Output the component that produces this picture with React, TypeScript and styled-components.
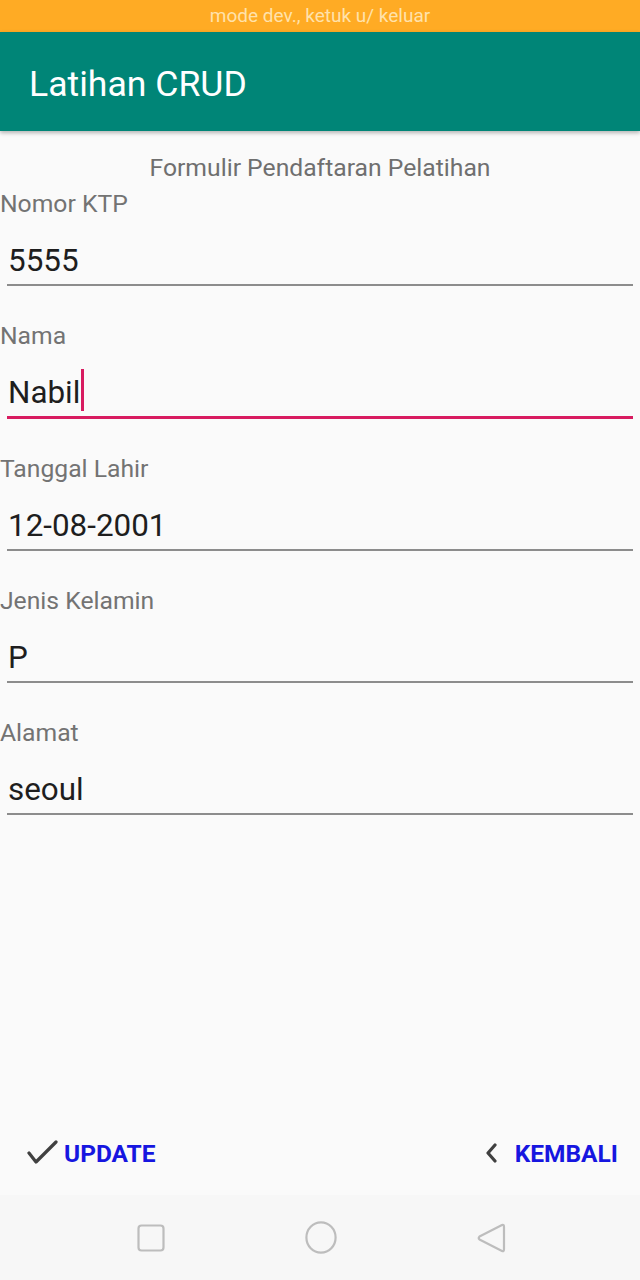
import React from "react";
import styled, { createGlobalStyle } from "styled-components";

const Global = createGlobalStyle`
  html, body { margin: 0; padding: 0; background: #fafafa; }
  body { font-family: Roboto, "Noto Sans", sans-serif; }
  * { box-sizing: border-box; }
`;

const Screen = styled.div`
  width: 640px;
  height: 1280px;
  display: flex;
  flex-direction: column;
  background: #fafafa;
  overflow: hidden;
`;

const StatusBar = styled.div`
  height: 32px;
  background: #ffab24;
  color: #ffe2ab;
  font-size: 19px;
  line-height: 32px;
  text-align: center;
  flex: none;
`;

const AppBar = styled.header`
  height: 99px;
  flex: none;
  background: #008577;
  display: flex;
  align-items: center;
  padding: 0 0 0 29px;
  box-shadow: 0 2px 4px rgba(0, 0, 0, 0.28);
  position: relative;
  z-index: 1;
`;

const AppTitle = styled.h1`
  margin: 0;
  color: #ffffff;
  font-size: 35.6px;
  font-weight: 400;
  line-height: 40px;
  padding-top: 4px;
`;

const Main = styled.main`
  flex: 1;
  display: flex;
  flex-direction: column;
  padding-top: 23px;
`;

const FormTitle = styled.div`
  text-align: center;
  font-size: 24.7px;
  line-height: 28px;
  color: #6f6f6f;
  height: 36px;
`;

const Field = styled.div`
  display: flex;
  flex-direction: column;
  height: 132.3px;
`;

const Label = styled.div`
  font-size: 24.7px;
  line-height: 28px;
  color: #737373;
  height: 53px;
`;

const Value = styled.div`
  font-size: 31.4px;
  line-height: 36px;
  color: #1e1e1e;
  padding-left: 8px;
  height: 41px;
  display: flex;
  align-items: flex-start;
`;

const Cursor = styled.span`
  display: inline-block;
  width: 3px;
  height: 42px;
  margin-top: -6px;
  margin-left: 1px;
  background: #d81b60;
`;

const Underline = styled.div<{ $focused?: boolean }>`
  margin: 0 7px;
  height: ${(p) => (p.$focused ? "3px" : "2px")};
  background: ${(p) => (p.$focused ? "#d81b60" : "#8c8c8c")};
`;

const ButtonBar = styled.div`
  height: 84px;
  flex: none;
  display: flex;
  align-items: center;
  justify-content: space-between;
  padding: 0 22px 0 26px;
  margin-top: auto;
`;

const ActionButton = styled.button`
  display: flex;
  align-items: center;
  gap: 6px;
  border: none;
  background: transparent;
  padding: 0;
  font-family: Roboto, "Noto Sans", sans-serif;
  font-weight: 700;
  font-size: 24.5px;
  color: #1616e0;
`;

const NavBar = styled.nav`
  height: 85px;
  flex: none;
  background: #f7f7f7;
  display: flex;
  align-items: center;
  justify-content: space-between;
  padding: 0 134px 0 137px;
`;

const fields = [
  { label: "Nomor KTP", value: "5555" },
  { label: "Nama", value: "Nabil", focused: true },
  { label: "Tanggal Lahir", value: "12-08-2001" },
  { label: "Jenis Kelamin", value: "P" },
  { label: "Alamat", value: "seoul" },
];

export default function App() {
  return (
    <Screen>
      <Global />
      <StatusBar>mode dev., ketuk u/ keluar</StatusBar>
      <AppBar>
        <AppTitle>Latihan CRUD</AppTitle>
      </AppBar>
      <Main>
        <FormTitle>Formulir Pendaftaran Pelatihan</FormTitle>
        {fields.map((f) => (
          <Field key={f.label}>
            <Label>{f.label}</Label>
            <Value>
              {f.value}
              {f.focused && <Cursor />}
            </Value>
            <Underline $focused={f.focused} />
          </Field>
        ))}
        <ButtonBar>
          <ActionButton>
            <svg width="32" height="26" viewBox="0 0 32 26">
              <path d="M3 13 L10 22 L30 2" fill="none" stroke="#404040" strokeWidth="3.2" strokeLinecap="round" strokeLinejoin="round" />
            </svg>
            UPDATE
          </ActionButton>
          <ActionButton>
            <svg width="14" height="20" viewBox="0 0 14 20" style={{ marginRight: 10 }}>
              <path d="M10 2 L3 10 L10 18" fill="none" stroke="#404040" strokeWidth="3.2" strokeLinecap="round" strokeLinejoin="round" />
            </svg>
            KEMBALI
          </ActionButton>
        </ButtonBar>
      </Main>
      <NavBar>
        <svg width="28" height="28" viewBox="0 0 28 28">
          <rect x="1.5" y="1.5" width="25" height="25" rx="3" fill="none" stroke="#bdbdbd" strokeWidth="2.2" />
        </svg>
        <svg width="32" height="33" viewBox="0 0 32 33">
          <ellipse cx="16" cy="16.5" rx="14.6" ry="15.2" fill="none" stroke="#bdbdbd" strokeWidth="2.2" />
        </svg>
        <svg width="30" height="32" viewBox="0 0 30 32">
          <path d="M26 3 Q28 2 28 5 L28 27 Q28 30 26 29 L3.5 17.5 Q2 16 3.5 14.5 Z" fill="none" stroke="#bdbdbd" strokeWidth="2.2" strokeLinejoin="round" />
        </svg>
      </NavBar>
    </Screen>
  );
}
